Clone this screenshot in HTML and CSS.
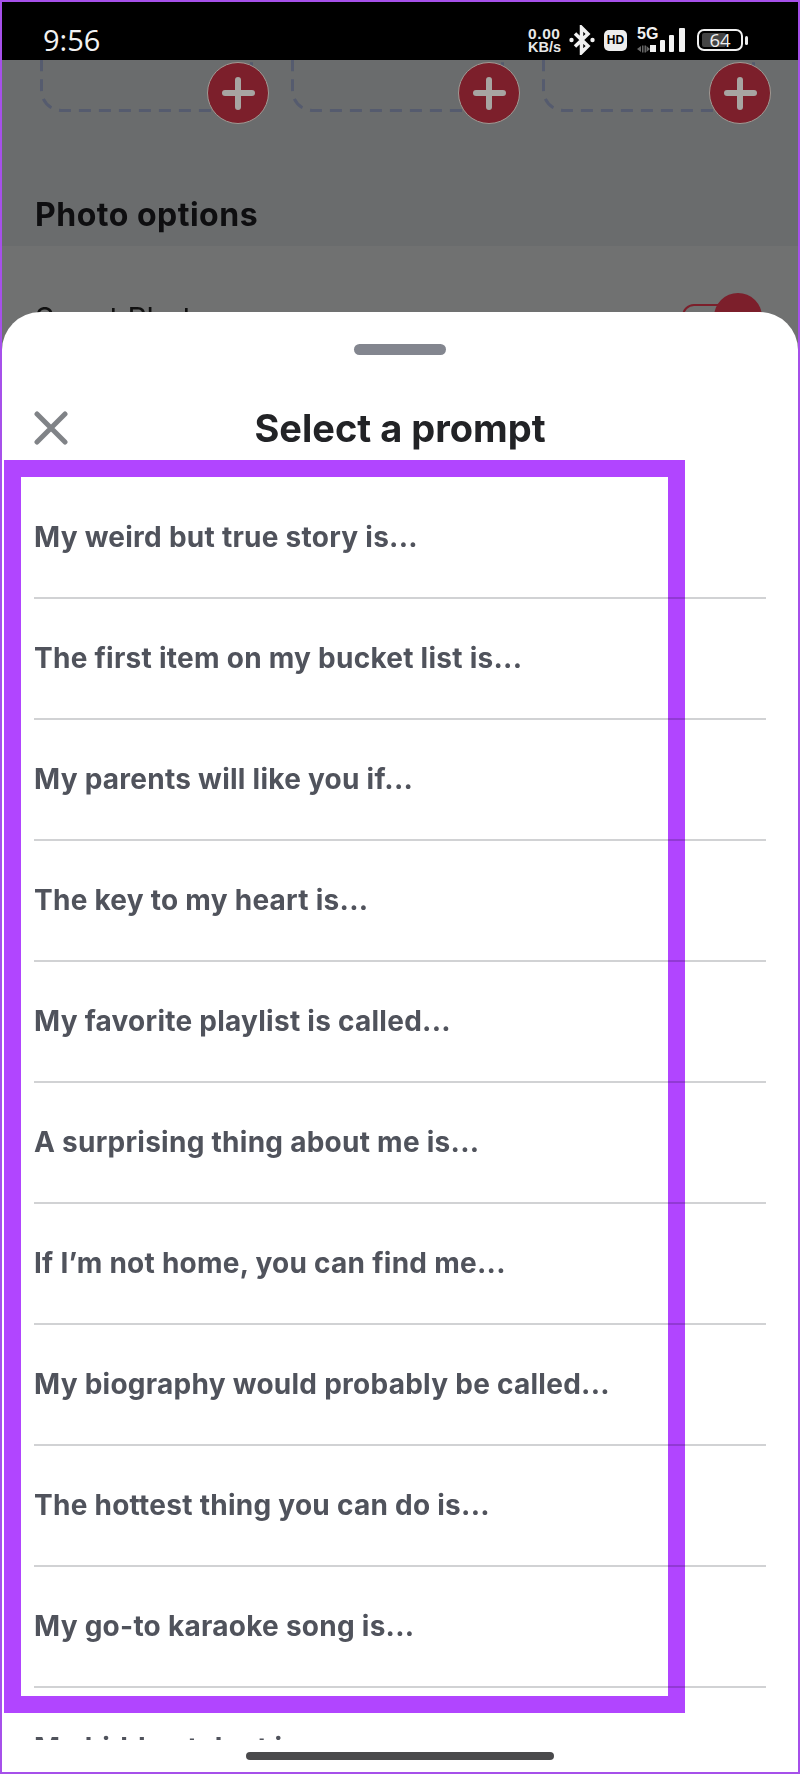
FILE: index.html
```html
<!DOCTYPE html>
<html lang="en">
<head>
<meta charset="utf-8">
<title>Select a prompt</title>
<link rel="stylesheet" href="styles.css">
</head>
<body>
<div class="screen">
  <header class="status">
    <span class="clock">9:56</span>
    <div class="status-icons">
      <span class="speed"><span class="speed-value">0.00</span><span>KB/s</span></span>
      <svg class="bt" width="26" height="30" viewBox="0 0 26 30" aria-hidden="true">
        <path d="M6 8.5 L19 21 L12.5 27.5 V2.5 L19 9 L6 21.5" fill="none" stroke="#f2f2f2" stroke-width="3.5"/>
        <circle cx="2.5" cy="15" r="2.2" fill="#f2f2f2"/>
        <circle cx="23.5" cy="15" r="2.2" fill="#f2f2f2"/>
      </svg>
      <span class="hd">HD</span>
      <span class="network">
        <span class="net-label">5G</span>
        <svg class="arrows" width="13" height="8" viewBox="0 0 13 8" aria-hidden="true">
          <path d="M0 4 L4 1 V7 Z M5 0.500 H6.500 V7.500 H5 Z M7.500 0.500 H9 V7.500 H7.500 Z M13 4 L9.500 1 V7 Z" fill="#666"/>
        </svg>
      </span>
      <svg class="signal" width="36" height="24" viewBox="0 0 36 24" aria-hidden="true">
        <rect x="0" y="17" width="6" height="7" fill="#f2f2f2"/>
        <rect x="10" y="12" width="5" height="12" rx="1" fill="#f2f2f2"/>
        <rect x="19" y="7" width="5" height="17" rx="1" fill="#f2f2f2"/>
        <rect x="29" y="0" width="6" height="24" rx="1" fill="#f2f2f2"/>
      </svg>
      <span class="battery"><span class="battery-fill"></span><span class="battery-num">64</span></span>
      <span class="battery-nub"></span>
    </div>
  </header>

  <div class="backdrop">
    <div class="slots">
      <div class="slot">
        <svg class="slot-outline" width="213" height="90" aria-hidden="true"><rect x="1.500" y="1.500" width="210" height="87" rx="20" /></svg>
        <span class="add"><span class="add-h"></span><span class="add-v"></span></span>
      </div>
      <div class="slot">
        <svg class="slot-outline" width="213" height="90" aria-hidden="true"><rect x="1.500" y="1.500" width="210" height="87" rx="20" /></svg>
        <span class="add"><span class="add-h"></span><span class="add-v"></span></span>
      </div>
      <div class="slot">
        <svg class="slot-outline" width="213" height="90" aria-hidden="true"><rect x="1.500" y="1.500" width="210" height="87" rx="20" /></svg>
        <span class="add"><span class="add-h"></span><span class="add-v"></span></span>
      </div>
    </div>
    <h2 class="section-title">Photo options</h2>
    <div class="section-body">
      <span class="option">Smart Photos</span>
      <span class="toggle"><span class="toggle-knob"></span></span>
    </div>
  </div>

  <section class="sheet">
    <div class="handle"></div>
    <div class="sheet-head">
      <svg class="close" width="34" height="34" viewBox="0 0 34 34" aria-hidden="true">
        <path d="M3 3 L31 31 M31 3 L3 31" stroke="#808387" stroke-width="5" stroke-linecap="round"/>
      </svg>
      <h1 class="sheet-title">Select a prompt</h1>
    </div>
    <ul class="prompts">
      <li>My weird but true story is...</li>
      <li>The first item on my bucket list is...</li>
      <li>My parents will like you if...</li>
      <li>The key to my heart is...</li>
      <li>My favorite playlist is called...</li>
      <li>A surprising thing about me is...</li>
      <li>If I’m not home, you can find me...</li>
      <li>My biography would probably be called...</li>
      <li>The hottest thing you can do is...</li>
      <li>My go-to karaoke song is...</li>
      <li>My hidden talent is...</li>
    </ul>
    <div class="home-area"><span class="home-bar"></span></div>
  </section>

  <div class="highlight"></div>
</div>
</body>
</html>
```
FILE: styles.css
```css
* { box-sizing: border-box; }
html, body { margin: 0; padding: 0; background: #fff; }
body { font-family: "Inter", "Liberation Sans", sans-serif; }

.screen {
  position: relative;
  width: 800px;
  height: 1774px;
  border: 2px solid #a650ea;
  overflow: hidden;
  background: #707171;
}

/* status bar */
.status {
  position: relative;
  z-index: 1;
  height: 58px;
  background: #000;
  color: #f2f2f2;
  display: flex;
  align-items: center;
  justify-content: space-between;
  padding: 18px 50px 0 41px;
}
.clock { font-family: "Open Sans", sans-serif; font-size: 29px; font-weight: 500; line-height: 30px; }
.status-icons { display: flex; align-items: center; }
.speed {
  display: flex;
  flex-direction: column;
  width: 34px;
  font-family: "Liberation Sans", sans-serif;
  font-weight: 700;
  font-size: 14.5px;
  line-height: 13px;
  color: #e8e8e8;
}
.speed-value { font-size: 15.5px; letter-spacing: 0.6px; line-height: 15px; }
.bt { margin-left: 7px; }
.hd {
  margin-left: 9px;
  width: 23px;
  height: 21px;
  border-radius: 5px;
  background: #ededed;
  color: #000;
  font-family: "Liberation Sans", sans-serif;
  font-weight: 700;
  font-size: 12px;
  line-height: 21px;
  text-align: center;
}
.network {
  margin-left: 10px;
  width: 22px;
  height: 26px;
  display: flex;
  flex-direction: column;
  justify-content: space-between;
}
.net-label {
  font-family: "Liberation Sans", sans-serif;
  font-weight: 700;
  font-size: 16px;
  line-height: 13px;
}
.signal { margin-left: -9px; }
.battery {
  position: relative;
  margin-left: 11px;
  width: 46px;
  height: 22px;
  border: 2px solid #f0f0f0;
  border-radius: 7px;
  display: flex;
  align-items: center;
  justify-content: center;
}
.battery-fill {
  position: absolute;
  left: 3px;
  top: 2px;
  bottom: 2px;
  width: 24px;
  border-radius: 2px;
  background: #444;
}
.battery-num {
  position: relative;
  font-family: "Open Sans", sans-serif;
  font-size: 18.5px;
  line-height: 18px;
  color: #eee;
}
.battery-nub {
  margin-left: 2px;
  width: 3px;
  height: 9px;
  border-radius: 2px;
  background: #eee;
}

/* dimmed page behind the sheet */
.backdrop { position: relative; }
.slots {
  display: grid;
  grid-template-columns: repeat(3, 213px);
  column-gap: 38px;
  padding-left: 38px;
  height: 122px;
  background: #6a6c6d;
}
.slot {
  position: relative;
  height: 90px;
  margin-top: -38px;
}
.slot-outline { display: block; }
.slot-outline rect {
  fill: none;
  stroke: #555b6e;
  stroke-width: 3;
  stroke-dasharray: 12 8;
}
.add {
  position: absolute;
  right: -16px;
  bottom: -12px;
  width: 62px;
  height: 62px;
  border-radius: 50%;
  background: #7c1f2b;
  border: 1px solid #a09a94;
}
.add-h, .add-v { position: absolute; background: #a7a5a2; border-radius: 3px; }
.add-h { left: 14px; top: 27px; width: 33px; height: 6px; }
.add-v { left: 27px; top: 14px; width: 6px; height: 33px; }

.section-title {
  margin: 0;
  height: 64px;
  padding: 16px 0 0 33px;
  font-size: 32px;
  letter-spacing: 0.5px;
  line-height: 34px;
  font-weight: 700;
  color: #0e0e10;
  background: #6a6c6d;
}
.section-body {
  position: relative;
  height: 66px;
  padding: 55px 0 0 33px;
  background: #707171;
}
.option { font-size: 30px; line-height: 34px; color: #111; }
.toggle {
  position: absolute;
  right: 36px;
  top: 58px;
  width: 80px;
  height: 40px;
  border: 2px solid #7c1f2b;
  border-radius: 12px;
}
.toggle-knob {
  position: absolute;
  right: -2px;
  top: -13px;
  width: 48px;
  height: 48px;
  border-radius: 50%;
  background: #7c1f2b;
}

/* sheet */
.sheet {
  position: absolute;
  left: 0;
  right: 0;
  top: 310px;
  bottom: 0;
  background: #fff;
  border-radius: 38px 38px 0 0;
  overflow: hidden;
  padding: 32px 32px 0;
}
.handle {
  width: 92px;
  height: 11px;
  margin: 0 auto;
  border-radius: 6px;
  background: #83868f;
}
.sheet-head {
  position: relative;
  height: 90px;
  margin-top: 28px;
  margin-bottom: 5px;
  display: flex;
  align-items: center;
  justify-content: center;
}
.close { position: absolute; left: 0; top: 28px; }
.sheet-title {
  margin: 0;
  font-size: 38px;
  line-height: 46px;
  font-weight: 700;
  color: #222326;
}
.prompts {
  list-style: none;
  margin: 0;
  padding: 0;
  width: 732px;
}
.prompts li {
  height: 121px;
  border-bottom: 2px solid #d1d2d4;
  display: flex;
  align-items: center;
  padding: 0 0 2px 0;
  font-size: 28px;
  letter-spacing: 0.26px;
  font-weight: 700;
  color: #50535c;
}
.prompts li:last-child { border-bottom: 0; }

.home-area {
  position: absolute;
  left: 0;
  right: 0;
  bottom: 0;
  height: 32px;
  background: #fff;
}
.home-bar {
  position: absolute;
  left: 244px;
  top: 12px;
  width: 308px;
  height: 8px;
  border-radius: 4px;
  background: #4a4a4c;
}

/* annotation drawn over the screenshot */
.highlight {
  position: absolute;
  left: 2px;
  top: 458px;
  width: 681px;
  height: 1253px;
  border: 17px solid #b145ff;
  mix-blend-mode: multiply;
  pointer-events: none;
}
```
